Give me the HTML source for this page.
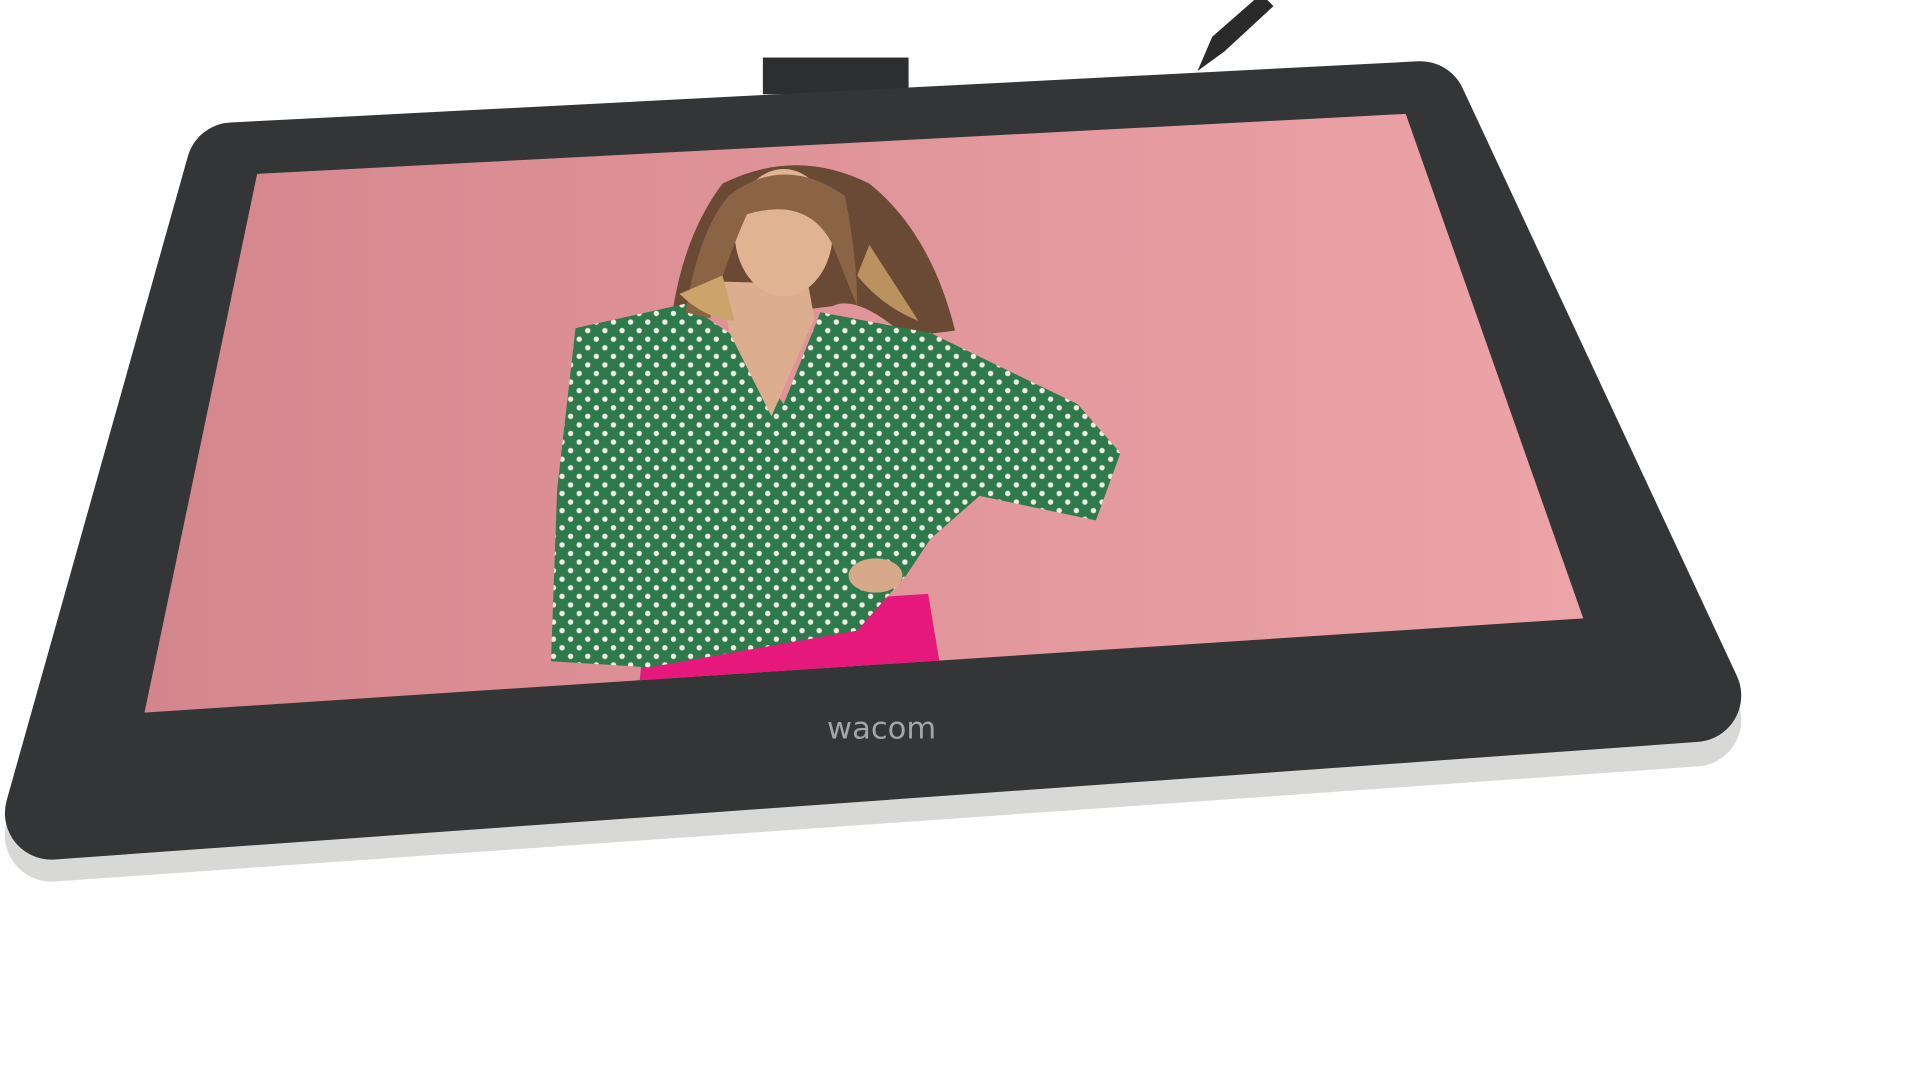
<!DOCTYPE html>
<html><head><meta charset="utf-8"><style>
html,body{margin:0;padding:0;background:#fff;width:1920px;height:1080px;overflow:hidden}
svg{display:block}
</style></head><body>
<svg width="1920" height="1080" viewBox="0 0 1568 882" xmlns="http://www.w3.org/2000/svg">
<defs>
<linearGradient id="pk" x1="0" y1="0" x2="1" y2="0"><stop offset="0" stop-color="#d4868d"/><stop offset="1" stop-color="#eca4a8"/></linearGradient>
<pattern id="dots" width="14" height="14" patternUnits="userSpaceOnUse"><rect width="14" height="14" fill="#2f7a4c"/><circle cx="4" cy="4" r="2.2" fill="#f0ede4"/><circle cx="11" cy="11" r="2.2" fill="#f0ede4"/></pattern>
<clipPath id="scr"><polygon points="210,142 1148,93 1293,505 118,582"/></clipPath>
</defs>
<rect width="1568" height="882" fill="#fff"/>
<polygon points="190,142 1162,94 1384,588 42,682" fill="#d8d9d7" stroke="#d8d9d7" stroke-width="76" stroke-linejoin="round"/>
<rect x="623" y="47" width="119" height="30" fill="#2c2e2f"/>
<path d="M978,58 L990,30 L1030,-5 L1040,5 L1000,42 Z" fill="#2a2a2a"/>
<polygon points="190,138 1160,88 1384,568 42,664" fill="#333536" stroke="#333536" stroke-width="76" stroke-linejoin="round"/>
<polygon points="210,142 1148,93 1293,505 118,582" fill="url(#pk)"/>
<g clip-path="url(#scr)">
<polygon points="528,500 758,485 768,545 522,560" fill="#e6187c"/>
<rect x="535" y="482" width="150" height="26" fill="#1b1b1b" transform="rotate(-3 600 495)"/>
<path d="M590,150 Q650,120 710,150 Q760,190 780,270 L740,275 Q700,240 680,250 L600,260 L550,250 Q560,190 590,150Z" fill="#6b4a35"/>
<polygon points="470,268 560,248 600,275 640,330 670,255 760,272 880,330 915,370 895,425 800,405 760,440 740,470 700,515 530,545 450,540 455,400" fill="url(#dots)"/>
<polygon points="590,230 660,232 665,260 630,340 595,270" fill="#dcae8f"/>
<ellipse cx="640" cy="190" rx="40" ry="52" fill="#e0b393"/>
<path d="M595,160 Q640,125 690,160 Q700,210 700,250 L680,200 Q660,160 610,175 Q590,220 580,260 L560,255 Q570,190 595,160Z" fill="#8a6445"/>
<path d="M555,240 Q575,260 600,262 L590,225Z" fill="#caa46a"/>
<path d="M700,225 Q720,250 750,262 L710,200Z" fill="#b99260"/>
<ellipse cx="715" cy="470" rx="22" ry="14" fill="#d8a88a"/>
</g>
<text x="720" y="603" text-anchor="middle" font-family="DejaVu Sans, sans-serif" font-size="25" fill="#a4a6a6">wacom</text>
</svg>
</body></html>
